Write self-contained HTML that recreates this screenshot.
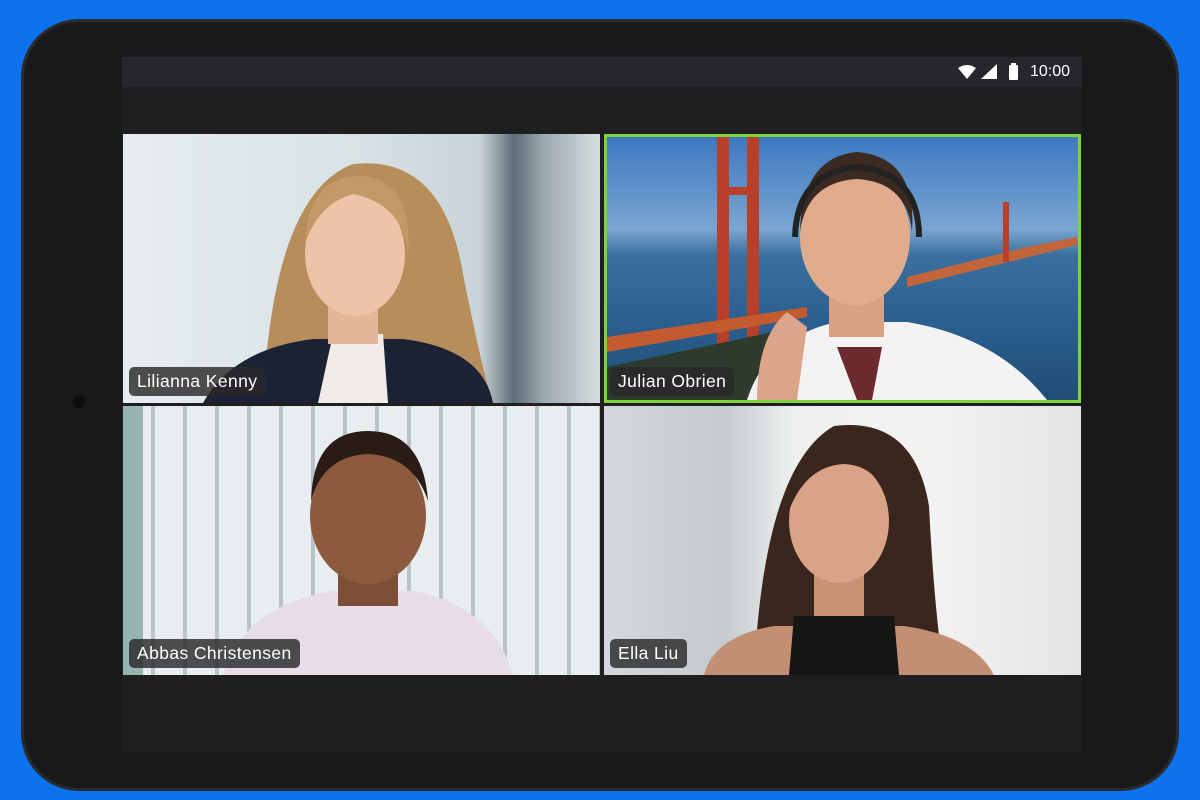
<!DOCTYPE html>
<html><head><style>
*{margin:0;padding:0;box-sizing:border-box}
body{width:1200px;height:800px;background:#0e72ed;position:relative;overflow:hidden;font-family:"Liberation Sans",sans-serif}
.tab{position:absolute;left:21px;top:19px;width:1158px;height:772px;border-radius:58px;background:#18191b;border:3px solid #2b2b2d}
.scr{position:absolute;left:122px;top:57px;width:960px;height:695px;background:#1f1f1f}
.sb{position:absolute;left:0;top:0;width:960px;height:30px;background:#26272b}
.time{position:absolute;right:12px;top:6px;color:#fff;font-size:16px}
.tile{position:absolute;overflow:hidden}
.lbl{position:absolute;left:6px;bottom:7px;height:29px;padding:0 8px;line-height:29px;background:rgba(40,40,40,.82);color:#fff;font-size:17.5px;letter-spacing:.4px;border-radius:5px}
.cam{position:absolute;left:73px;top:396px;width:12px;height:12px;border-radius:50%;background:#0c0c0c}
</style></head><body>
<div class="tab"></div>
<div class="cam"></div>
<div class="scr">
 <div class="sb">
  <svg style="position:absolute;left:835px;top:6px" width="70" height="18" viewBox="0 0 70 18">
   <path d="M1 5 Q10 -1 19 5 L10 16 Z" fill="#fff"/>
   <path d="M24 16 L40 16 L40 1 Z" fill="#fff"/>
   <rect x="52" y="2" width="9" height="15" rx="1" fill="#fff"/><rect x="54" y="0" width="5" height="3" fill="#fff"/>
  </svg>
  <div class="time">10:00</div>
 </div>
 <div class="tile" style="left:1px;top:77px;width:477px;height:269px;background:linear-gradient(90deg,#e6ecef 0%,#d9e2e6 50%,#c8d3d8 75%,#5e6c76 82%,#9aa7ae 88%,#d7dee2 100%)">
  <svg width="477" height="269" style="position:absolute;left:0;top:0">
   <path d="M140 269 Q150 60 230 30 Q320 20 340 140 Q360 240 370 269 Z" fill="#b88d5c"/>
   <path d="M80 269 Q110 215 190 205 L280 205 Q360 215 370 269 Z" fill="#1c2236"/>
   <path d="M195 269 L210 200 L260 200 L265 269Z" fill="#efece8"/>
   <rect x="205" y="160" width="50" height="50" fill="#e4b79a"/>
   <ellipse cx="232" cy="120" rx="50" ry="62" fill="#edc4a8"/>
   <path d="M182 110 Q185 40 240 42 Q290 48 285 120 Q280 70 230 60 Q195 70 182 110Z" fill="#c29a68"/>
  </svg>
  <div class="lbl">Lilianna Kenny</div>
 </div>
 <div class="tile" style="left:482px;top:77px;width:477px;height:269px;border:3px solid #7ed23a;background:linear-gradient(180deg,#3d78c0 0%,#7aa6d0 35%,#3a6f9e 45%,#2b5f8f 70%,#1f4d76 100%)">
  <svg width="471" height="263" style="position:absolute;left:0;top:0">
   <rect x="110" y="0" width="12" height="230" fill="#b8402a"/><rect x="140" y="0" width="12" height="230" fill="#b8402a"/>
   <rect x="110" y="50" width="42" height="8" fill="#b8402a"/>
   <path d="M0 200 L200 170 L200 180 L0 215Z" fill="#c35a30"/>
   <path d="M0 230 L190 190 L190 263 L0 263Z" fill="#2d3a2d"/>
   <path d="M300 140 L420 110 L470 100 L470 108 L300 150Z" fill="#c0663a"/>
   <rect x="396" y="65" width="6" height="60" fill="#b8402a"/>
   <path d="M140 263 Q160 200 230 185 L300 185 Q390 200 440 263Z" fill="#f3f3f3"/>
   <path d="M230 210 L250 263 L265 263 L275 210Z" fill="#6a2a2e"/>
   <rect x="222" y="150" width="55" height="50" fill="#d9a084"/>
   <ellipse cx="248" cy="100" rx="55" ry="68" fill="#e1ac8e"/>
   <path d="M193 95 Q195 20 250 15 Q310 20 305 95 Q300 45 250 42 Q200 45 193 95Z" fill="#3a2a22"/>
   <path d="M188 100 Q190 35 250 30 Q312 35 312 100" stroke="#222" stroke-width="6" fill="none"/>
   <path d="M150 263 Q150 200 180 175 L200 190 L190 263Z" fill="#dca58a"/>
  </svg>
  <div class="lbl" style="left:3px;bottom:4px">Julian Obrien</div>
 </div>
 <div class="tile" style="left:1px;top:349px;width:477px;height:269px;background:repeating-linear-gradient(90deg,#e8eef0 0 28px,#b8c4c6 28px 32px),#e8eef0">
  <svg width="477" height="269" style="position:absolute;left:0;top:0">
   <rect x="0" y="0" width="20" height="269" fill="#5f8f86" opacity=".6"/>
   <path d="M100 269 Q120 200 210 185 L290 185 Q370 200 390 269Z" fill="#e6dde6"/>
   <rect x="215" y="145" width="60" height="55" fill="#7a4e37"/>
   <ellipse cx="245" cy="110" rx="58" ry="68" fill="#8c5a3e"/>
   <path d="M188 95 Q190 25 245 25 Q300 25 305 95 Q290 50 245 48 Q200 50 188 95Z" fill="#2a1c15"/>
  </svg>
  <div class="lbl">Abbas Christensen</div>
 </div>
 <div class="tile" style="left:482px;top:349px;width:477px;height:269px;background:linear-gradient(90deg,#d4d8dc 0%,#c5cacd 25%,#eef0f0 40%,#f2f2f2 70%,#e4e4e4 100%)">
  <svg width="477" height="269" style="position:absolute;left:0;top:0">
   <path d="M150 269 Q160 60 230 20 Q310 10 325 100 Q330 200 340 269Z" fill="#3a261c"/>
   <path d="M100 269 Q110 230 170 220 L300 220 Q370 230 390 269Z" fill="#c38f72"/>
   <path d="M185 269 L190 210 L290 210 L295 269Z" fill="#151515"/>
   <rect x="210" y="160" width="50" height="50" fill="#c89275"/>
   <ellipse cx="235" cy="115" rx="50" ry="62" fill="#d8a386"/>
   <path d="M183 110 Q185 35 240 38 Q290 45 287 110 Q280 60 240 58 Q200 60 183 110Z" fill="#3a261c"/>
  </svg>
  <div class="lbl">Ella Liu</div>
 </div>
</div>
</body></html>
